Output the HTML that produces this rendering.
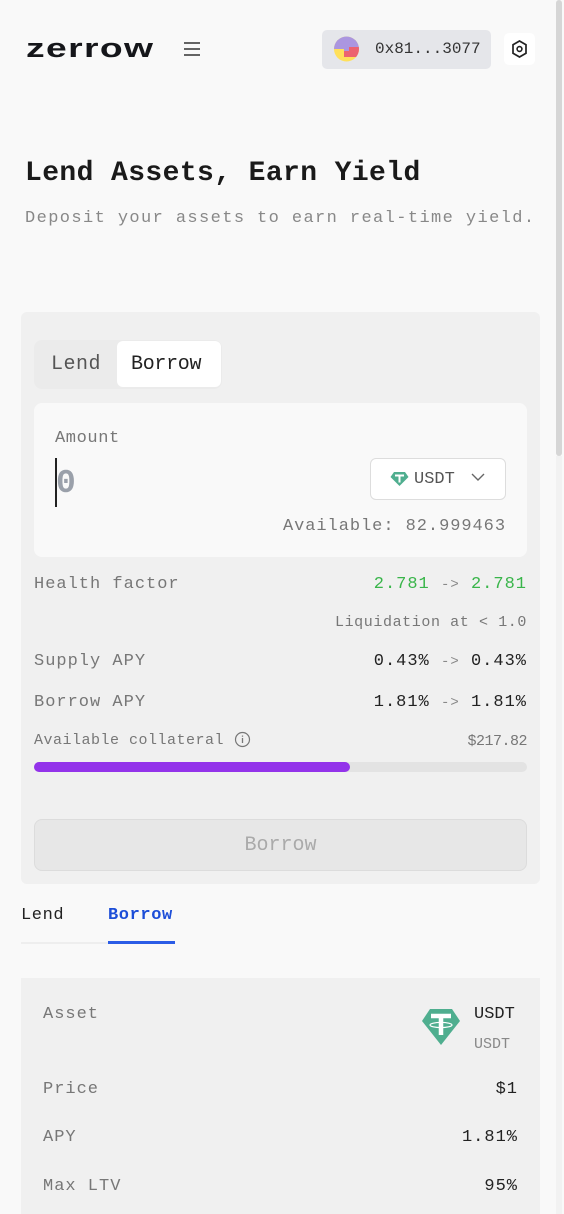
<!DOCTYPE html>
<html><head><meta charset="utf-8"><style>
*{margin:0;padding:0;box-sizing:border-box}
body{width:564px;height:1214px;overflow:hidden;background:#f9f9f9;font-family:"Liberation Mono",monospace;color:#222;position:relative}
.a{position:absolute;white-space:nowrap}
.m{font-size:17px;letter-spacing:1px}
.g{color:#777}
.r{text-align:right}
</style></head><body>
<div class="a" style="left:26px;top:33px;font-family:'Liberation Sans',sans-serif;font-weight:bold;font-size:27px;letter-spacing:1px;color:#15161a;transform:scaleX(1.38);transform-origin:left;line-height:30px">zerrow</div>
<svg class="a" style="left:183px;top:41px" width="18" height="16"><path d="M1 2h16M1 8h16M1 14h16" stroke="#333" stroke-width="1.6"/></svg>
<div class="a" style="left:322px;top:30px;width:169px;height:39px;background:#e5e6ea;border-radius:5px"></div>
<svg class="a" style="left:334px;top:36px" width="25" height="26" viewBox="0 0 25 26"><defs><clipPath id="c"><circle cx="12.5" cy="13" r="12.5"/></clipPath></defs><g clip-path="url(#c)"><rect width="25" height="26" fill="#ffe05a"/><rect width="25" height="13" fill="#ab96e0"/><rect x="10" y="11" width="15" height="10" fill="#ec6370"/><rect x="10" y="11" width="5" height="4" fill="#ab96e0"/></g></svg>
<div class="a" style="left:375px;top:40px;font-size:16px;letter-spacing:0px;color:#333">0x81...3077</div>
<div class="a" style="left:504px;top:33px;width:31px;height:32px;background:#fff;border-radius:5px"></div>
<svg class="a" style="left:510px;top:39px" width="19" height="20" viewBox="0 0 19 20"><path d="M9.5 2l6.5 3.8v8.4L9.5 18 3 14.2V5.8z" fill="none" stroke="#222" stroke-width="1.7"/><circle cx="9.5" cy="10" r="2.4" fill="none" stroke="#222" stroke-width="1.6"/></svg>
<div class="a" style="left:556px;top:0;width:6px;height:456px;background:#d6d6d6;border-radius:3px"></div>
<div class="a" style="left:556px;top:456px;width:6px;height:758px;background:#f2f2f2"></div>

<div class="a" style="left:25px;top:158px;font-size:28px;letter-spacing:0.4px;font-weight:bold;color:#1a1a1a">Lend Assets, Earn Yield</div>
<div class="a g" style="left:25px;top:209px;font-size:17px;letter-spacing:1.4px;color:#888">Deposit your assets to earn real-time yield.</div>

<div class="a" style="left:21px;top:312px;width:519px;height:572px;background:#f0f0f0;border-radius:6px"></div>
<div class="a" style="left:34px;top:340px;width:188px;height:49px;background:#ebebeb;border-radius:8px"></div>
<div class="a" style="left:117px;top:341px;width:104px;height:46px;background:#fff;border-radius:6px"></div>
<div class="a" style="left:51px;top:353px;font-size:20px;letter-spacing:0.5px;color:#555">Lend</div>
<div class="a" style="left:131px;top:353px;font-size:20px;letter-spacing:-0.3px;color:#222">Borrow</div>

<div class="a" style="left:34px;top:403px;width:493px;height:154px;background:#f9f9f9;border-radius:8px"></div>
<div class="a" style="left:55px;top:429px;font-size:17px;letter-spacing:0.6px;color:#777">Amount</div>
<div class="a" style="left:55px;top:458px;width:2px;height:49px;background:#222"></div>
<div class="a" style="left:56px;top:465px;font-size:33px;color:#9aa0aa;font-weight:bold">0</div>
<div class="a" style="left:370px;top:458px;width:136px;height:42px;background:#fff;border:1px solid #ddd;border-radius:6px"></div>
<svg class="a" style="left:390px;top:471px" width="19" height="16" viewBox="0 0 19 16"><path d="M4 1h11l3.5 5L9.5 15 .5 6z" fill="#4fae8f"/><path d="M5 4.5h9M9.5 4.5v7" stroke="#fff" stroke-width="2"/></svg>
<div class="a" style="left:414px;top:470px;font-size:17px;letter-spacing:0px;color:#555">USDT</div>
<svg class="a" style="left:471px;top:472px" width="14" height="10"><path d="M1 2l6 6 6-6" fill="none" stroke="#666" stroke-width="1.4"/></svg>
<div class="a r g" style="right:58px;top:517px;font-size:17px;letter-spacing:0.95px;color:#777">Available: 82.999463</div>

<div class="a m g" style="left:34px;top:575px">Health factor</div>
<div class="a m r" style="right:37px;top:575px;color:#39b54a">2.781 <span style="color:#888;font-size:14px">-&gt;</span> 2.781</div>
<div class="a r g" style="right:37px;top:614px;font-size:15px;letter-spacing:0.6px">Liquidation at &lt; 1.0</div>
<div class="a m g" style="left:34px;top:652px">Supply APY</div>
<div class="a m r" style="right:37px;top:652px;color:#222">0.43% <span style="color:#888;font-size:14px">-&gt;</span>  0.43%</div>
<div class="a m g" style="left:34px;top:693px">Borrow APY</div>
<div class="a m r" style="right:37px;top:693px;color:#222">1.81% <span style="color:#888;font-size:14px">-&gt;</span> 1.81%</div>
<div class="a g" style="left:34px;top:732px;font-size:15px;letter-spacing:0.5px">Available collateral</div>
<svg class="a" style="left:234px;top:731px" width="17" height="17"><circle cx="8.5" cy="8.5" r="7" fill="none" stroke="#777" stroke-width="1.2"/><path d="M8.5 7v5M8.5 4.5v1.2" stroke="#777" stroke-width="1.3"/></svg>
<div class="a r g" style="right:37px;top:733px;font-size:15px;letter-spacing:-0.5px">$217.82</div>
<div class="a" style="left:34px;top:762px;width:493px;height:10px;background:#e3e3e3;border-radius:5px"></div>
<div class="a" style="left:34px;top:762px;width:316px;height:10px;background:#9333ea;border-radius:5px"></div>
<div class="a" style="left:34px;top:819px;width:493px;height:52px;background:#e7e7e7;border:1px solid #dcdcdc;border-radius:8px;text-align:center;line-height:52px;font-size:20px;color:#aaa;letter-spacing:0px">Borrow</div>

<div class="a" style="left:21px;top:906px;font-size:17px;letter-spacing:0.6px;color:#222">Lend</div>
<div class="a" style="left:108px;top:906px;font-size:17px;letter-spacing:0.6px;color:#1d4ed8;font-weight:bold">Borrow</div>
<div class="a" style="left:21px;top:942px;width:154px;height:2px;background:#eee"></div>
<div class="a" style="left:108px;top:941px;width:67px;height:3px;background:#2b5ce6"></div>

<div class="a" style="left:21px;top:978px;width:519px;height:236px;background:#f0f0f0"></div>
<div class="a m g" style="left:43px;top:1005px">Asset</div>
<svg class="a" style="left:421px;top:1008px" width="40" height="38" viewBox="0 0 40 38"><path d="M9 1h22l8 12L20 37 1 13z" fill="#4fae8f"/><path d="M10 8h20M20 8v19" stroke="#fff" stroke-width="4.5"/><ellipse cx="20" cy="17" rx="11" ry="2.6" fill="none" stroke="#fff" stroke-width="1.2"/></svg>
<div class="a" style="left:474px;top:1005px;font-size:17px;letter-spacing:0px;color:#222">USDT</div>
<div class="a" style="left:474px;top:1036px;font-size:15px;letter-spacing:0px;color:#888">USDT</div>
<div class="a m g" style="left:43px;top:1080px">Price</div>
<div class="a m r" style="right:46px;top:1080px">$1</div>
<div class="a m g" style="left:43px;top:1128px">APY</div>
<div class="a m r" style="right:46px;top:1128px">1.81%</div>
<div class="a m g" style="left:43px;top:1177px">Max LTV</div>
<div class="a m r" style="right:46px;top:1177px">95%</div>
</body></html>
